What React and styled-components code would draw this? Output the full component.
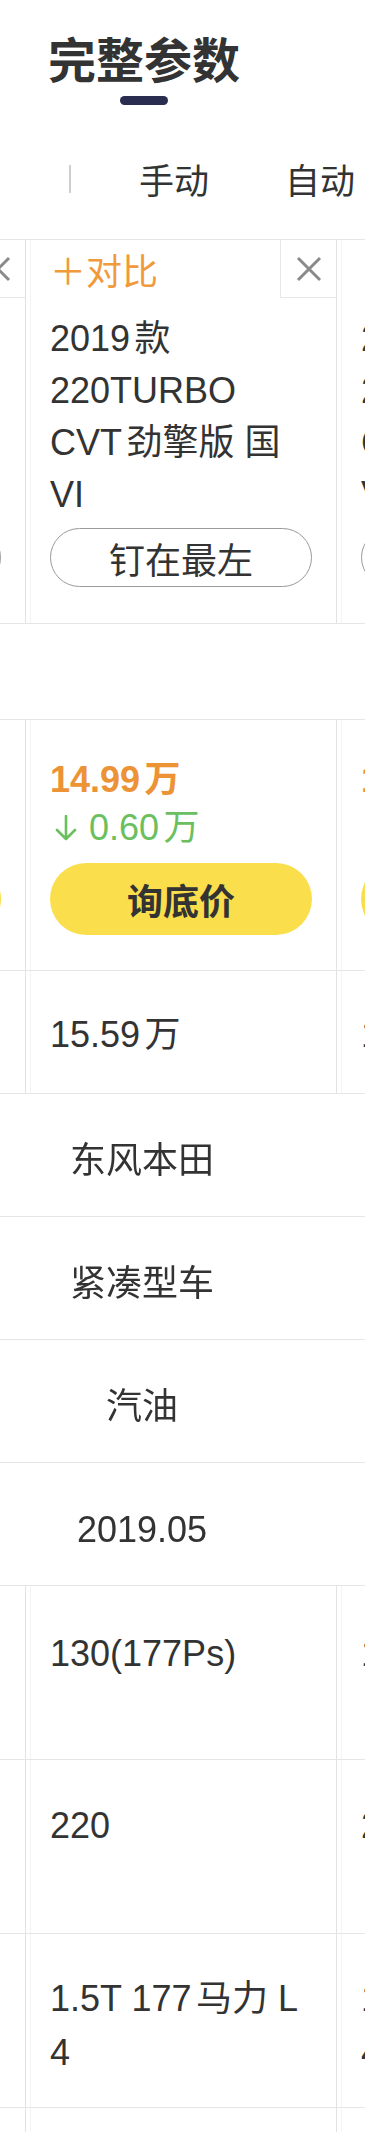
import React, { useLayoutEffect, useRef } from "react";
import styled, { createGlobalStyle } from "styled-components";

const COL = 311;

const cars = [
  {
    name: "2019款 220TURBO CVT精英版 国VI",
    price: "12.99万",
    drop: "0.60万",
    guide: "13.59万",
    power: "130(177Ps)",
    torque: "220",
    engine: "1.5T 177马力 L4",
    gearbox: "CVT无级变速",
  },
  {
    name: "2019款 220TURBO CVT劲擎版 国VI",
    price: "14.99万",
    drop: "0.60万",
    guide: "15.59万",
    power: "130(177Ps)",
    torque: "220",
    engine: "1.5T 177马力 L4",
    gearbox: "CVT无级变速",
  },
  {
    name: "2019款 220TURBO CVT豪华版 国VI",
    price: "16.59万",
    drop: "0.60万",
    guide: "17.19万",
    power: "130(177Ps)",
    torque: "220",
    engine: "1.5T 177马力 L4",
    gearbox: "CVT无级变速",
  },
];

const shared = ["东风本田", "紧凑型车", "汽油", "2019.05"];

const GlobalStyle = createGlobalStyle`
  html, body {
    margin: 0;
    padding: 0;
    background: #fff;
  }
  body {
    font-family: "Liberation Sans", "Noto Sans CJK SC", sans-serif;
    color: #333;
    text-autospace: normal;
  }
`;

const App = () => {
  const scroller = useRef(null);

  // the table is scrolled so the second car sits in view
  useLayoutEffect(() => {
    if (scroller.current) scroller.current.scrollLeft = 285;
  }, []);

  return (
    <Page>
      <GlobalStyle />
      <Header>
        <TitleBlock>
          <Title>完整参数</Title>
          <TitleBar />
        </TitleBlock>
        <Tabs>
          <TabDivider />
          <Tab>手动</Tab>
          <Tab>自动</Tab>
        </Tabs>
      </Header>

      <Scroller ref={scroller}>
        <Track>
          <Row>
            {cars.map((car) => (
              <Cell key={car.name}>
                <CardTop>
                  <Compare>＋对比</Compare>
                  <CloseBox>
                    <svg width="26" height="26" viewBox="0 0 26 26">
                      <path
                        d="M2 2 L24 24 M24 2 L2 24"
                        stroke="#8a8a8a"
                        strokeWidth="3"
                        fill="none"
                      />
                    </svg>
                  </CloseBox>
                </CardTop>
                <CardBody>
                  <CarName>{car.name}</CarName>
                  <PinButton>钉在最左</PinButton>
                </CardBody>
              </Cell>
            ))}
          </Row>

          <BlankRow />

          <Row>
            {cars.map((car) => (
              <PriceCell key={car.name}>
                <Price>{car.price}</Price>
                <Drop>
                  <svg width="22" height="26" viewBox="0 0 22 26">
                    <path
                      d="M11 1 V24 M2 15 L11 24 L20 15"
                      stroke="#6cbf5e"
                      strokeWidth="2.6"
                      fill="none"
                      strokeLinecap="round"
                      strokeLinejoin="round"
                    />
                  </svg>
                  {car.drop}
                </Drop>
                <AskButton>询底价</AskButton>
              </PriceCell>
            ))}
          </Row>

          <Row $h={122}>
            {cars.map((car) => (
              <ValueCell key={car.name} $top={37}>
                {car.guide}
              </ValueCell>
            ))}
          </Row>

          {shared.map((value) => (
            <SpanRow key={value}>
              <SpanText>{value}</SpanText>
            </SpanRow>
          ))}

          <Row $h={173}>
            {cars.map((car) => (
              <ValueCell key={car.name} $top={41}>
                {car.power}
              </ValueCell>
            ))}
          </Row>
          <Row $h={173}>
            {cars.map((car) => (
              <ValueCell key={car.name} $top={39}>
                {car.torque}
              </ValueCell>
            ))}
          </Row>
          <Row $h={173}>
            {cars.map((car) => (
              <ValueCell key={car.name} $top={38}>
                {car.engine}
              </ValueCell>
            ))}
          </Row>
          <Row $h={173}>
            {cars.map((car) => (
              <ValueCell key={car.name} $top={38}>
                {car.gearbox}
              </ValueCell>
            ))}
          </Row>
        </Track>
      </Scroller>
    </Page>
  );
};

const Page = styled.div`
  width: 365px;
  overflow: hidden;
  background: #fff;
`;

const Header = styled.header`
  padding: 33px 0;
  border-bottom: 1px solid #e6e6e6;
  overflow: hidden;
`;

const TitleBlock = styled.div`
  display: flex;
  flex-direction: column;
  align-items: center;
  width: fit-content;
  margin-left: 48px;
`;

const Title = styled.h1`
  margin: 0;
  font-family: "Noto Sans CJK SC", sans-serif;
  font-size: 48px;
  line-height: 48px;
  font-weight: 700;
  color: #333;
`;

const TitleBar = styled.div`
  width: 48px;
  height: 9px;
  margin-top: 15px;
  border-radius: 5px;
  background: #2b2d50;
`;

const Tabs = styled.nav`
  display: flex;
  align-items: center;
  height: 54px;
  margin-top: 47px;
  white-space: nowrap;
`;

const TabDivider = styled.span`
  flex: 0 0 2px;
  height: 28px;
  margin: 0 30px 0 69px;
  background: #cfcfcf;
`;

const Tab = styled.span`
  flex-shrink: 0;
  padding: 0 38px;
  font-family: "Noto Sans CJK SC", sans-serif;
  font-size: 35px;
  line-height: 54px;
  color: #333;
`;

const Scroller = styled.div`
  width: 365px;
  overflow: hidden;
`;

const Track = styled.div`
  width: max-content;
`;

const Row = styled.div`
  display: flex;
  height: ${(p) => (p.$h ? `${p.$h}px` : "auto")};
  border-bottom: 1px solid #e6e6e6;
`;

const Cell = styled.div`
  flex: 0 0 ${COL}px;
  box-sizing: border-box;
  border-right: 1px solid #e2e2e2;
  box-shadow: inset 4px 0 0 #fff, inset 5px 0 0 #f3f3f3;
`;

const CardTop = styled.div`
  display: flex;
  align-items: center;
  justify-content: space-between;
  height: 58px;
  padding-left: 24px;
`;

const Compare = styled.span`
  font-family: "Noto Sans CJK SC", sans-serif;
  font-size: 36px;
  line-height: 1;
  color: #f09a3c;
`;

const CloseBox = styled.div`
  display: flex;
  align-items: center;
  justify-content: center;
  box-sizing: border-box;
  width: 56px;
  height: 58px;
  border-left: 1px solid #e8e8e8;
  border-bottom: 1px solid #e8e8e8;
`;

const CardBody = styled.div`
  padding: 15px 24px 36px;
`;

const CarName = styled.div`
  max-width: 250px;
  font-size: 36px;
  line-height: 52px;
  color: #333;
`;

const PinButton = styled.button`
  display: flex;
  align-items: center;
  justify-content: center;
  box-sizing: border-box;
  width: 100%;
  height: 59px;
  margin-top: 7px;
  padding: 0;
  border: 1px solid #9a9a9a;
  border-radius: 30px;
  background: transparent;
  font-family: "Noto Sans CJK SC", sans-serif;
  font-size: 36px;
  color: #333;
`;

const BlankRow = styled.div`
  height: 95px;
  border-bottom: 1px solid #e6e6e6;
`;

const PriceCell = styled(Cell)`
  padding: 37px 24px 35px;
`;

const Price = styled.div`
  font-size: 36px;
  line-height: 46px;
  font-weight: 700;
  color: #ec9336;
`;

const Drop = styled.div`
  display: flex;
  align-items: center;
  gap: 12px;
  padding-left: 5px;
  font-size: 36px;
  line-height: 50px;
  color: #6cbf5e;
`;

const AskButton = styled.button`
  display: flex;
  align-items: center;
  justify-content: center;
  width: 100%;
  height: 72px;
  margin-top: 10px;
  padding: 0;
  border: none;
  border-radius: 36px;
  background: #fade4b;
  font-family: "Noto Sans CJK SC", sans-serif;
  font-size: 36px;
  font-weight: 700;
  color: #333;
`;

const ValueCell = styled(Cell)`
  padding: ${(p) => p.$top}px 30px 0 24px;
  font-size: 36px;
  line-height: 54px;
  word-break: break-all;
  color: #333;
`;

const SpanRow = styled.div`
  height: 122px;
  border-bottom: 1px solid #e6e6e6;
`;

const SpanText = styled.div`
  position: sticky;
  left: 0;
  width: 284px;
  padding-top: 40px;
  text-align: center;
  font-size: 36px;
  line-height: 54px;
  color: #333;
`;

export default App;
